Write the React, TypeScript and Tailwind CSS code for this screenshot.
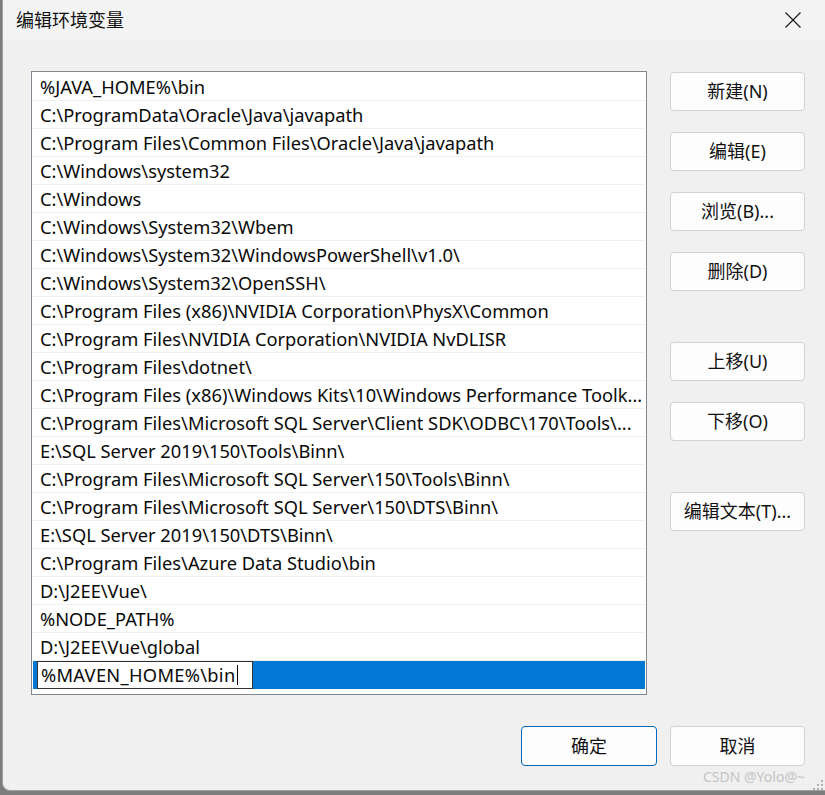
const paths = [
  '%JAVA_HOME%\\bin',
  'C:\\ProgramData\\Oracle\\Java\\javapath',
  'C:\\Program Files\\Common Files\\Oracle\\Java\\javapath',
  'C:\\Windows\\system32',
  'C:\\Windows',
  'C:\\Windows\\System32\\Wbem',
  'C:\\Windows\\System32\\WindowsPowerShell\\v1.0\\',
  'C:\\Windows\\System32\\OpenSSH\\',
  'C:\\Program Files (x86)\\NVIDIA Corporation\\PhysX\\Common',
  'C:\\Program Files\\NVIDIA Corporation\\NVIDIA NvDLISR',
  'C:\\Program Files\\dotnet\\',
  'C:\\Program Files (x86)\\Windows Kits\\10\\Windows Performance Toolk...',
  'C:\\Program Files\\Microsoft SQL Server\\Client SDK\\ODBC\\170\\Tools\\...',
  'E:\\SQL Server 2019\\150\\Tools\\Binn\\',
  'C:\\Program Files\\Microsoft SQL Server\\150\\Tools\\Binn\\',
  'C:\\Program Files\\Microsoft SQL Server\\150\\DTS\\Binn\\',
  'E:\\SQL Server 2019\\150\\DTS\\Binn\\',
  'C:\\Program Files\\Azure Data Studio\\bin',
  'D:\\J2EE\\Vue\\',
  '%NODE_PATH%',
  'D:\\J2EE\\Vue\\global',
];

function SideButton({ label, className = '' }: { label: string; className?: string }) {
  return (
    <button className={`h-[39px] w-[135px] rounded-[4px] border border-[#d1d1d1] bg-[#fdfdfd] text-[18px] text-[#111] ${className}`}>
      {label}
    </button>
  );
}

export default function App() {
  const font = { fontFamily: '"Noto Sans", "Noto Sans CJK SC", sans-serif' };

  return (
    <div className="w-[825px] h-[795px] bg-[#7d7d7d] overflow-hidden" style={font}>
      <div className="relative ml-[2px] h-[791px] w-[830px] bg-[#f0f0f0] border-l border-b border-[#a0a0a0] rounded-bl-[8px] flex flex-col">
        {/* Title bar */}
        <div className="h-[40px] bg-[#f3f3f3] flex items-center justify-between pl-[13px]">
          <span className="text-[18px] text-[#111] leading-none">编辑环境变量</span>
          <svg width="16" height="16" viewBox="0 0 16 16" className="mr-[31px]" fill="none" stroke="#1b1b1b" strokeWidth="1.2">
            <path d="M0.5 0.5 L15.5 15.5 M15.5 0.5 L0.5 15.5" />
          </svg>
        </div>

        {/* Body */}
        <div className="flex pl-[28px] pt-[31px] gap-[23px]">
          <div className="w-[616px] h-[624px] border border-[#828790] bg-white p-[1px]">
            {paths.map((p) => (
              <div
                key={p}
                className="h-[28px] border-b border-[#f0f0f0] pl-[7px] flex items-center text-[18.3px] text-[#0a0a0a] whitespace-nowrap"
              >
                {p}
              </div>
            ))}
            <div className="h-[28px] bg-[#0078d4] flex items-center pl-[4px]">
              <div className="h-[28px] w-[216px] bg-white border border-[#333] flex items-center pl-[3px] text-[18.3px] tracking-[0.3px] text-[#0a0a0a] whitespace-nowrap">
                %MAVEN_HOME%\bin
                <span className="ml-[1px] h-[20px] w-[1px] bg-black" />
              </div>
            </div>
          </div>

          <div className="flex flex-col pt-[1px]">
            <SideButton label="新建(N)" />
            <SideButton label="编辑(E)" className="mt-[21px]" />
            <SideButton label="浏览(B)..." className="mt-[21px]" />
            <SideButton label="删除(D)" className="mt-[21px]" />
            <SideButton label="上移(U)" className="mt-[51px]" />
            <SideButton label="下移(O)" className="mt-[21px]" />
            <SideButton label="编辑文本(T)..." className="mt-[51px]" />
          </div>
        </div>

        {/* Footer */}
        <div className="flex pl-[518px] pt-[31px] gap-[13px]">
          <button className="h-[40px] w-[136px] rounded-[4px] border border-[#0067c0] bg-[#fdfdfd] text-[18px] text-[#111]">
            确定
          </button>
          <button className="h-[40px] w-[135px] rounded-[4px] border border-[#d1d1d1] bg-[#fdfdfd] text-[18px] text-[#111]">
            取消
          </button>
        </div>

        {/* Watermark overlay */}
        <span className="absolute left-[700px] top-[770px] text-[14px] text-[#c4c4c4] leading-none">
          CSDN @Yolo@~
        </span>
        <div className="absolute left-[810px] top-[780px] grid grid-cols-3 gap-[2px]">
          <span />
          <span />
          <span className="h-[2px] w-[2px] bg-[#b0b0b0]" />
          <span />
          <span className="h-[2px] w-[2px] bg-[#b0b0b0]" />
          <span className="h-[2px] w-[2px] bg-[#b0b0b0]" />
          <span className="h-[2px] w-[2px] bg-[#b0b0b0]" />
          <span className="h-[2px] w-[2px] bg-[#b0b0b0]" />
          <span className="h-[2px] w-[2px] bg-[#b0b0b0]" />
        </div>
      </div>
    </div>
  );
}
